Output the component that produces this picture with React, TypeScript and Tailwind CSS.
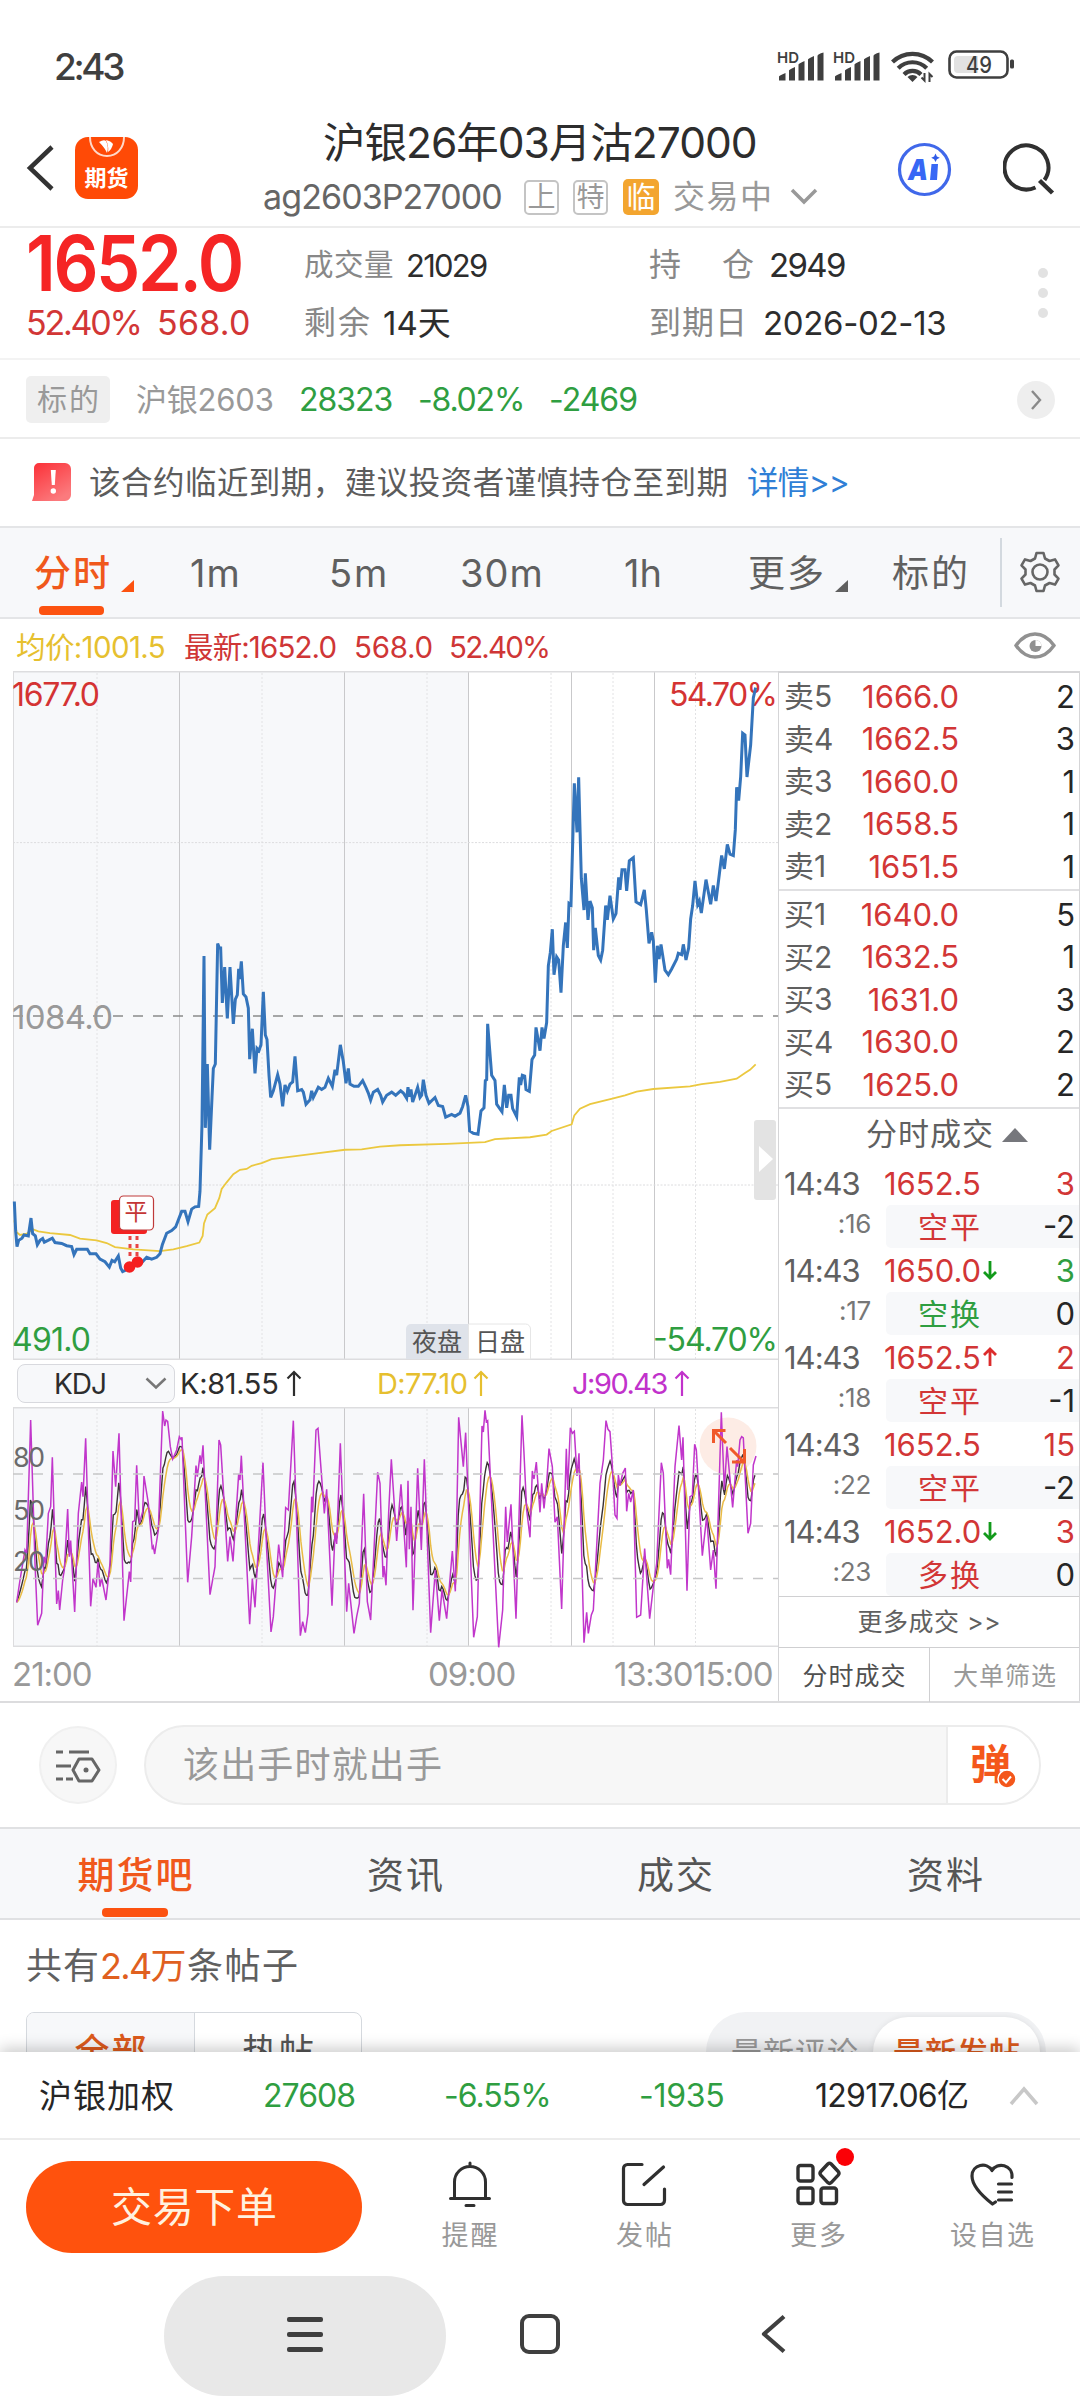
import { useLayoutEffect, useRef, useState } from "react";

/** Single-line label that spreads its glyphs over the width of its box. */
function T({ className = "", children }: { className?: string; children: string }) {
  const box = useRef<HTMLSpanElement>(null);
  const text = useRef<HTMLSpanElement>(null);
  const [spacing, setSpacing] = useState(0);
  useLayoutEffect(() => {
    if (!box.current || !text.current) return;
    const gaps = Math.max(1, Array.from(children).length - 1);
    setSpacing((box.current.offsetWidth - text.current.offsetWidth) / gaps);
  }, [children]);
  return (
    <span ref={box} className={"block shrink-0 whitespace-pre leading-none " + className}>
      <span ref={text} style={{ letterSpacing: spacing }}>{children}</span>
    </span>
  );
}

const SHIFT = 1140;
type P = [number, number];
const parse = (s: string, dx = 0): P[] =>
  s.trim().split(/\s+/).map((p) => {
    const [x, y] = p.split(",").map(Number);
    return [x + dx, y] as P;
  });
const toPath = (pts: P[]) => pts.map(([x, y], i) => `${i ? "L" : "M"}${x.toFixed(1)} ${y.toFixed(1)}`).join("");

const price = toPath([
  ...parse(`43,1213 47,1280 51,1314 56,1300 66,1295 72,1288 85,1290 93,1250 98,1285 106,1290 112,1310 120,1300 128,1296 133,1304 144,1300 157,1295 165,1305 185,1307 200,1312 215,1314 222,1332 230,1320 262,1320 270,1330 288,1330 300,1342 315,1348 328,1360 336,1345 344,1348 355,1335 362,1362 368,1370 380,1366 390,1360 410,1349 425,1350 440,1338 455,1342 470,1338 480,1330 487,1310 500,1284 515,1278 527,1270 545,1235 555,1235 564,1258 575,1230 585,1225 596,1224 600,1190 606,1040 612,663 616,1048 622,905 629,1097 636,980 640,915 646,905 653,635 658,645 662,645 667,768 674,688 682,803 690,688 700,815 706,760 712,750 716,692 719,715 724,675 730,748 738,755 745,780 749,894 757,826 765,926 771,870 777,875 783,862 790,743 796,840 801,850 807,930 812,980 820,965 833,929 840,950 848,1000 855,952 862,966 870,950 878,945 885,888 893,965 905,962 910,968 918,995 930,985 935,965 940,980 955,957 965,962 975,957 985,937 997,955 1005,918 1010,930 1021,862 1030,900 1038,948 1045,915 1050,950 1062,955 1075,955 1088,942 1098,958 1105,970 1112,986 1120,968 1133,962`),
  ...parse(`2,975 8,990 20,975 35,968 47,975 62,965 70,970 80,982 84,957 88,978 93,962 98,990 105,975 113,957 120,980 125,975 130,940 138,975 147,993 165,980 175,998 188,1000 197,1024 215,1018 225,1022 240,1015 248,1000 257,975 264,1000 269,1055 280,1060 294,1062 303,1010 312,1003 316,942 320,940 323,815 335,930 345,942 350,995 366,1012 373,952 380,1003 386,975 393,975 398,1005 410,1023 418,935 422,952 427,930 434,932 438,962 448,966 456,895 464,885 468,823 480,875 486,823 492,848 500,812 505,685 511,655 517,603 522,705 530,665 536,672 543,745 550,640 557,588 562,645 567,545 573,548 583,276 591,386 596,263 604,490 612,560 616,478 624,582 630,540 637,555 641,650 646,600 655,662 662,672 668,650 677,550 682,582 690,528 700,580 708,568 716,487 720,515 726,470 735,470 740,517 748,450 760,443 768,542 782,548 793,515 799,560 807,635 815,610 820,630 826,723 832,640 837,670 843,637 855,695 865,705 875,692 890,670 895,657 905,660 910,637 918,672 926,645 932,580 938,550 945,495 953,548 958,540 964,567 978,492 992,547 1000,505 1008,540 1018,480 1025,438 1033,468 1042,413 1050,435 1060,438 1066,380 1070,285 1076,315 1082,262 1088,164 1095,168 1101,262 1112,190 1120,85 1127,62`, SHIFT),
]);

const average = toPath([
  ...parse(`43,1255 50,1282 60,1288 80,1285 98,1275 115,1280 150,1284 210,1288 240,1296 290,1300 320,1306 345,1315 400,1320 480,1324 520,1320 560,1313 598,1305 608,1290 612,1262 622,1242 645,1228 658,1205 665,1185 680,1170 700,1152 720,1142 740,1140 755,1133 785,1127 815,1118 880,1112 950,1105 1035,1097 1085,1096 1140,1090`),
  ...parse(`60,1087 200,1084 315,1080 345,1073 450,1069 500,1063 515,1055 575,1040 583,1020 600,1005 630,995 700,982 735,975 770,967 820,961 930,955 965,950 1020,945 1070,938 1095,925 1110,918 1127,906`, SHIFT),
]);

const jPoints: P[] = [
  ...parse(`50,757 60,690 75,600 80,610 92,210 105,640 113,826 125,790 132,620 137,640 145,490 152,470 157,322 170,762 175,722 179,780 188,690 193,660 203,477 208,620 212,572 224,786 235,490 245,396 249,440 257,265 272,769 279,686 288,712 294,636 300,710 305,684 318,750 330,640 339,303 347,410 357,250 372,812 388,665 392,696 398,515 404,512 410,346 418,520 428,485 432,378 445,460 457,598 460,590 464,612 475,540 488,183 494,228 498,210 503,214 511,290 518,327 530,300 538,260 543,268 546,262 563,697 575,560 588,347 592,380 600,316 604,342 609,286 630,734 645,650 657,270 662,285 683,634 690,560 699,634 716,372 720,390 724,317 749,823 757,686 765,772 789,338 800,600 813,846 820,800 836,584 848,682 857,473 865,480 880,212 901,857 908,815 916,848 924,790 935,440 938,487 948,240 954,235 973,490 980,418 996,767 1005,548 1010,582 1021,280 1040,785 1046,700 1062,850 1070,800 1078,760 1091,431 1102,755 1112,810 1133,367`),
  ...parse(`0,400 9,682 12,648 18,706 26,487 34,328 50,573 63,403 79,652 84,392 88,598 93,470 99,781 113,355 124,600 133,328 152,848 166,660 178,812 186,720 200,806 217,603 226,724 236,202 250,350 257,248 281,862 292,800 306,228 310,246 315,181 319,215 323,212 356,892 368,780 377,470 382,576 393,463 408,806 426,196 432,310 440,480 450,562 457,363 462,387 469,336 480,487 485,400 492,475 500,400 507,296 517,350 525,517 532,500 545,777 559,296 563,420 571,233 577,250 583,244 591,378 597,310 612,878 620,787 625,850 634,795 640,780 660,400 670,330 678,212 684,238 690,245 696,330 705,495 711,505 715,375 720,407 728,370 736,354 740,484 746,430 752,456 760,420 770,802 782,795 794,596 809,806 820,710 830,640 844,338 850,370 862,655 866,628 872,674 885,350 897,227 905,330 909,262 921,722 930,440 937,436 944,283 949,300 967,617 980,500 992,660 1000,600 1008,716 1024,187 1033,420 1041,290 1058,472 1070,330 1073,350 1080,270 1085,260 1090,264 1104,550 1112,520 1120,345 1128,318`, SHIFT),
];

/** K and D follow from J: J = 3K - 2D and D is a 1/3 moving average of K. */
function deriveKD(j: P[], step: number) {
  const k: P[] = [];
  const d: P[] = [];
  let prev = j[0][1];
  let i = 0;
  for (let x = j[0][0]; x <= j[j.length - 1][0]; x += step) {
    while (i < j.length - 2 && j[i + 1][0] < x) i++;
    const [x0, y0] = j[i];
    const [x1, y1] = j[i + 1];
    const jy = y0 + ((y1 - y0) * (x - x0)) / (x1 - x0);
    prev = (6 * prev + jy) / 7;
    d.push([x, prev]);
    k.push([x, (jy + 2 * prev) / 3]);
  }
  return { k: toPath(k), d: toPath(d) };
}
const kd = deriveKD(jPoints, 4.14);
const jPath = toPath(jPoints);

const SOLID = [179.5, 344.5, 468.5, 571.5, 654.5];
const DOTTED = [97, 262, 427, 551, 613, 695.5];

function Grid({ h }: { h: number }) {
  return (
    <>
      <rect x="13" y="0" width="455.5" height={h} fill="#f7f8fa" />
      {DOTTED.map((x) => (
        <line key={x} x1={x} x2={x} y1="2" y2={h} stroke="#e2e2e4" strokeDasharray="2 2" />
      ))}
      {SOLID.map((x) => (
        <line key={x} x1={x} x2={x} y1="1" y2={h} stroke="#c9c9cb" strokeWidth="1" />
      ))}
      <line x1="13.5" x2="13.5" y1="0" y2={h} stroke="#dcdcde" />
      <line x1="13" x2="778" y1="0.75" y2="0.75" stroke="#dddddf" strokeWidth="1.5" />
      <line x1="13" x2="778" y1={h - 0.75} y2={h - 0.75} stroke="#dddddf" strokeWidth="1.5" />
    </>
  );
}

function ChartText({ x, w, cy, size, fill, children }: { x: number; w: number; cy: number; size: number; fill: string; children: string }) {
  return (
    <text x={x} y={cy + size * 0.3635} textLength={w} fontSize={size} fill={fill}>{children}</text>
  );
}

function PriceChart() {
  return (
    <svg width="778" height="689" viewBox="0 0 778 689" className="block">
      <Grid h={689} />
      {[171.6, 514].map((y) => (
        <line key={y} x1="13" x2="778" y1={y} y2={y} stroke="#dcdcde" strokeDasharray="2 1.5" />
      ))}
      <line x1="13" x2="778" y1="345" y2="345" stroke="#8b8b8b" strokeWidth="1.6" strokeDasharray="10 10" />
      <ChartText x={12} w={88} cy={23.500} size={32} fill="#d43333">1677.0</ChartText>
      <ChartText x={669} w={109} cy={23.500} size={32} fill="#d43333">54.70%</ChartText>
      <ChartText x={12} w={101} cy={346.500} size={33} fill="#999">1084.0</ChartText>
      <ChartText x={12} w={79} cy={668.500} size={32} fill="#2f9e41">491.0</ChartText>
      <ChartText x={653} w={125} cy={668.500} size={32} fill="#2f9e41">-54.70%</ChartText>
      <g transform="translate(0 -11) scale(0.33333 0.44643)" fill="none" strokeLinejoin="miter">
        <path d={average} stroke="#ebc83f" strokeWidth="1.8" vectorEffect="non-scaling-stroke" />
        <path d={price} stroke="#3474bb" strokeWidth="3" vectorEffect="non-scaling-stroke" />
      </g>
      <rect x="111" y="529" width="36" height="34" rx="3" fill="#f32222" />
      <path d="M130 565v24M137 565v20" stroke="#e84444" strokeWidth="3" strokeDasharray="4 4" />
      <circle cx="129.5" cy="596" r="5.8" fill="#f51f1f" />
      <circle cx="137.5" cy="591" r="5.8" fill="#f51f1f" />
      <rect x="119.5" y="525" width="34" height="34" rx="4" fill="#fff" stroke="#bf3a3a" strokeWidth="1.2" />
      <text x="136" y="549" textAnchor="middle" fontSize="23" fill="#c43636">平</text>
      <path d="M406 688v-30a5 5 0 0 1 5-5h57.500v35z" fill="#dfe3ea" />
      <path d="M468.500 653h57a5 5 0 0 1 5 5v30h-62z" fill="#fff" stroke="#e6e6e6" />
      <text x="437" y="680" textAnchor="middle" fontSize="25" fill="#555">夜盘</text>
      <text x="500" y="680" textAnchor="middle" fontSize="25" fill="#555">日盘</text>
      <rect x="754" y="449" width="22" height="80" rx="3" fill="#e3e3e3" />
      <path d="M759 475l14 13-14 13z" fill="#fff" />
    </svg>
  );
}

function KdjChart() {
  return (
    <svg width="778" height="240" viewBox="0 0 778 240" className="block overflow-visible">
      <Grid h={240} />
      <circle cx="728" cy="39" r="28.500" fill="#fdece5" />
      <g transform="translate(0 -57) scale(0.33333)" fill="none">
        <path d={kd.k} stroke="#3a3236" strokeWidth="1.4" vectorEffect="non-scaling-stroke" />
        <path d={kd.d} stroke="#e9bb45" strokeWidth="1.5" vectorEffect="non-scaling-stroke" />
        <path d={jPath} stroke="#c136cb" strokeWidth="1.5" vectorEffect="non-scaling-stroke" />
      </g>
      {[67, 119, 171.5].map((y) => (
        <line key={y} x1="13" x2="778" y1={y} y2={y} stroke="#c6c6c8" strokeWidth="1.3" strokeDasharray="10 10" />
      ))}
      <ChartText x={13} w={32} cy={50.500} size={27} fill="#6b6b6b">80</ChartText>
      <ChartText x={13} w={32} cy={103} size={27} fill="#6b6b6b">50</ChartText>
      <ChartText x={13} w={32} cy={154.500} size={27} fill="#6b6b6b">20</ChartText>
      <g stroke="#f0592b" strokeWidth="3" fill="none">
        <path d="M726 36l-12-12M713.500 36v-12.500h12M730 41l13 13M732 55h12.500v-13" />
      </g>
    </svg>
  );
}

function UpArrow() {
  return (
    <svg width="16" height="27" viewBox="0 0 16 27" fill="none" stroke="currentColor" strokeWidth="2.2">
      <path d="M8 26V2M1.500 8.500L8 2l6.500 6.500" />
    </svg>
  );
}

function SignalBars() {
  return (
    <span className="relative block h-[32px] w-[56px]">
      <T className="absolute left-0 top-0 w-[22px] text-[15px] font-semibold">HD</T>
      <svg className="absolute left-[2px] top-[2px]" width="46" height="29" viewBox="0 0 46 29" fill="#3f3f3f">
        <path d="M0 28.500v-4q0-1 6.500-3.500v7.500zM10 28.500v-10q0-1 6-3.500v13.500zM19.500 28.500v-16q0-1 6-3.500v19.500zM29 28.500v-21q0-1 6-3.500v24.500zM38.500 28.500V4q0-2 6-3.500v28z" />
      </svg>
    </span>
  );
}

function StatusBar() {
  return (
    <div className="flex h-[120px] items-start pt-[48px] text-[#3f3f3f]">
      <T className="ml-[54px] w-[72px] text-[37px] font-medium">2:43</T>
      <div className="ml-[651px] mt-[2px] flex">
        <SignalBars />
        <SignalBars />
      </div>
      <svg className="ml-[2px] mt-[1px]" width="44" height="34" viewBox="0 0 44 34" fill="none" stroke="#3f3f3f" strokeWidth="4.200">
        <path d="M1.500 13a28.500 28.500 0 0 1 40 0M7.200 19.200a20 20 0 0 1 28.500 0M13 25.500a12 12 0 0 1 17 0" />
        <path d="M16.500 28a7 7 0 0 1 10 0l-5 5z" fill="#3f3f3f" stroke="none" />
        <path d="M33.500 24v7.500l-3-3M38.500 33v-8l3 3" strokeWidth="2" />
      </svg>
      <svg className="ml-[13px] mt-[1px]" width="68" height="30" viewBox="0 0 68 30">
        <rect x="1.500" y="2.500" width="58" height="26" rx="7" fill="#fff" stroke="#3f3f3f" strokeWidth="2.600" />
        <path d="M6 11a4 4 0 0 1 4-4h20v17H10a4 4 0 0 1-4-4z" fill="#e2e2e2" />
        <rect x="62" y="10.500" width="4" height="9" rx="1.500" fill="#3f3f3f" />
        <text x="18" y="23.500" textLength="26" lengthAdjust="spacingAndGlyphs" fontSize="22.500" fontWeight="500" fill="#3f3f3f">49</text>
      </svg>
    </div>
  );
}

function Header() {
  return (
    <header className="flex h-[108px] border-b-2 border-[#ececec]">
      <svg className="ml-[26px] mt-[24px]" width="30" height="48" viewBox="0 0 30 48" fill="none" stroke="#333" strokeWidth="4.500">
        <path d="M26 3L4 24l22 21" />
      </svg>
      <div className="relative ml-[19px] mt-[17px] h-[62px] w-[63px] overflow-hidden rounded-[13px] bg-[#ff4a06]">
        <svg className="absolute left-0 top-0" width="63" height="24" viewBox="0 0 63 24" fill="none">
          <path d="M15 0c0 11 7 19 17 19s17-8 17-19" stroke="#ffd9c9" strokeWidth="2" />
          <path d="M24 5q5-3 7-1q3 6 1 12q-2-5-8-11zM31 3q5 1 7 4q-1 5-5 8q1-6-2-12z" fill="#fff" />
        </svg>
        <span className="absolute left-0 top-[30px] w-full text-center text-[22px] font-bold leading-none text-white">期货</span>
      </div>
      <div className="ml-[124px] w-[560px] shrink-0">
        <T className="ml-[61px] mt-[2px] w-[435px] text-[42.500px] text-[#2d2d2d]">沪银26年03月沽27000</T>
        <div className="mt-[15px] flex h-[35px] items-center">
          <T className="ml-[1px] w-[240px] text-[34px] text-[#666]">ag2603P27000</T>
          <span className="ml-[21px] flex size-[35px] items-center justify-center rounded-[5px] border-2 border-[#c4c4c4] text-[28px] leading-none text-[#999]">上</span>
          <span className="ml-[14px] flex size-[35px] items-center justify-center rounded-[5px] border-2 border-[#c4c4c4] text-[28px] leading-none text-[#999]">特</span>
          <span className="ml-[15px] flex size-[36px] items-center justify-center rounded-[5px] bg-[#f3a52f] text-[29px] leading-none text-white">临</span>
          <T className="ml-[14px] w-[99px] text-[32px] text-[#999]">交易中</T>
          <svg className="ml-[18px]" width="28" height="18" viewBox="0 0 28 18" fill="none" stroke="#999" strokeWidth="3.500">
            <path d="M2 2l12 12L26 2" />
          </svg>
        </div>
      </div>
      <svg className="ml-[75px] mt-[22px]" width="55" height="55" viewBox="0 0 55 55">
        <circle cx="27.500" cy="27.500" r="25" fill="#fff" stroke="#4068ea" strokeWidth="3.200" />
        <path d="M38.500 11.500l1.400 2.900 2.900 1.400-2.900 1.400-1.400 2.900-1.400-2.900-2.900-1.400 2.900-1.400z" fill="#2f5be8" />
        <text x="11" y="38" textLength="20" lengthAdjust="spacingAndGlyphs" fontSize="29" fontWeight="900" fontStyle="italic" fill="#3767f5">A</text>
        <path d="M34.500 22h6.500l-1 16h-7z" fill="#3767f5" />
      </svg>
      <svg className="ml-[51px] mt-[23px]" width="52" height="54" viewBox="0 0 52 54" fill="none" stroke="#303030" strokeWidth="4">
        <path d="M32.500 44.500a22 22 0 1 1 9-7.500" />
        <path d="M36.500 37.500l13 12.500" strokeWidth="4.500" />
      </svg>
    </header>
  );
}

function Quote() {
  return (
    <section className="flex h-[132px] border-b-2 border-[#f3f3f3]">
      <div className="ml-[26px] w-[278px] shrink-0">
        <T className="-mt-[3px] w-[238px] origin-left scale-x-[0.915] text-[77px] font-semibold text-[#f52525]">1652.0</T>
        <div className="mt-[4px] flex h-[34px]">
          <T className="w-[117px] text-[34px] text-[#d23636]">52.40%</T>
          <T className="ml-[14px] w-[93px] text-[34px] text-[#d23636]">568.0</T>
        </div>
      </div>
      <div className="w-[345px] shrink-0 text-[#2d2d2d]">
        <div className="mt-[19px] flex h-[36px] items-center">
          <T className="w-[90px] text-[29.500px] text-[#888]">成交量</T>
          <T className="ml-[12px] w-[82px] text-[31px]">21029</T>
        </div>
        <div className="mt-[22px] flex h-[36px] items-center">
          <T className="w-[66px] text-[32px] text-[#888]">剩余</T>
          <T className="ml-[13px] w-[68px] text-[33px]">14天</T>
        </div>
      </div>
      <div className="w-[389px] shrink-0 text-[#2d2d2d]">
        <div className="mt-[19px] flex h-[36px] items-center">
          <div className="flex w-[105px] justify-between text-[32px] leading-none text-[#888]"><span>持</span><span>仓</span></div>
          <T className="ml-[15px] w-[77px] text-[33px]">2949</T>
        </div>
        <div className="mt-[22px] flex h-[36px] items-center">
          <T className="w-[98px] text-[32px] text-[#888]">到期日</T>
          <T className="ml-[16px] w-[184px] text-[33px]">2026-02-13</T>
        </div>
      </div>
      <div className="mt-[40px] flex flex-col gap-[10px]">
        <span className="size-[10px] rounded-full bg-[#e2e2e2]" />
        <span className="size-[10px] rounded-full bg-[#e2e2e2]" />
        <span className="size-[10px] rounded-full bg-[#e2e2e2]" />
      </div>
    </section>
  );
}

function Underlying() {
  return (
    <section className="flex h-[79px] items-center border-b-2 border-[#ececec] pt-[2px] text-[32px] text-[#2f9e41]">
      <div className="ml-[26px] -mt-[1px] flex h-[47px] w-[84px] items-center justify-center rounded-[5px] bg-[#efefef]">
        <T className="w-[62px] text-[30px] text-[#999]">标的</T>
      </div>
      <T className="ml-[26px] w-[138px] text-[31px] text-[#999]">沪银2603</T>
      <T className="ml-[25px] w-[94px]">28323</T>
      <T className="ml-[25px] w-[107px]">-8.02%</T>
      <T className="ml-[24px] w-[89px]">-2469</T>
      <span className="ml-[379px] flex size-[38px] items-center justify-center rounded-full bg-[#eee]">
        <svg width="12" height="20" viewBox="0 0 12 20" fill="none" stroke="#8a8a8a" strokeWidth="2.400"><path d="M2 1l8 9-8 9" /></svg>
      </span>
    </section>
  );
}

function Warning() {
  return (
    <section className="flex h-[87px] items-center">
      <svg className="ml-[32px] -mt-[1px]" width="39" height="38" viewBox="0 0 39 38">
        <defs>
          <linearGradient id="warn" x1="0" y1="0" x2="0.600" y2="1">
            <stop offset="0" stopColor="#fb2f36" />
            <stop offset="1" stopColor="#fb7a7d" />
          </linearGradient>
        </defs>
        <path d="M7 0h26a6 6 0 0 1 6 6v26a6 6 0 0 1-6 6H0l2-6V5a5 5 0 0 1 5-5z" fill="url(#warn)" />
        <path d="M18.800 7h5l-1 15h-3z" fill="#fff" /><circle cx="21.300" cy="28" r="2.700" fill="#fff" />
      </svg>
      <T className="ml-[18px] w-[639px] text-[31.500px] text-[#5c5c5c]">该合约临近到期，建议投资者谨慎持仓至到期</T>
      <T className="ml-[19px] w-[103px] text-[31.500px] text-[#2f7fd6]">详情&gt;&gt;</T>
    </section>
  );
}

function Corner() {
  return <svg className="mt-[26px]" width="13" height="12" viewBox="0 0 13 12" fill="currentColor"><path d="M13 0v12H0z" /></svg>;
}

function Periods() {
  return (
    <nav className="flex h-[93px] items-center border-y-2 border-[#e4e5e7] bg-[#f7f8fa] text-[38px] text-[#606060]">
      <div className="relative ml-[34px] flex h-full w-[77px] items-center pt-[1px] text-[#f0581c]">
        <T className="w-[76px] text-[37px] font-medium">分时</T>
        <span className="absolute bottom-[2px] left-[5px] h-[9px] w-[65px] rounded-[4px] bg-[#fc5210]" />
      </div>
      <span className="ml-[10px] text-[#fc5210]"><Corner /></span>
      <T className="ml-[56px] mt-[1px] w-[50px]">1m</T>
      <T className="ml-[89px] mt-[1px] w-[58px]">5m</T>
      <T className="ml-[73px] mt-[1px] w-[83px]">30m</T>
      <T className="ml-[81px] mt-[1px] w-[38px]">1h</T>
      <T className="ml-[86px] mt-[1px] w-[76px] text-[37px]">更多</T>
      <span className="ml-[11px]"><Corner /></span>
      <T className="ml-[44px] mt-[1px] w-[76px] text-[37px]">标的</T>
      <span className="ml-[32px] h-[69px] w-[2px] bg-[#d3d9df]" />
      <svg className="ml-[17px] mt-[1px]" width="42" height="44" viewBox="0 0 42 44" fill="none" stroke="#666" strokeWidth="2.600" strokeLinejoin="round">
        <path d="M17.500 2h7l1.500 5.500 4.500 2.500 5.500-1.600 3.500 6-4 4.100v5l4 4.100-3.500 6-5.500-1.600-4.500 2.500-1.500 5.500h-7L16 34.500 11.500 32 6 33.600l-3.500-6 4-4.100v-5l-4-4.100 3.500-6L11.500 10 16 7.500z" />
        <circle cx="21" cy="21" r="7.500" />
      </svg>
    </nav>
  );
}

function Legend() {
  return (
    <div className="flex h-[52px] items-center pt-[5px] text-[29.500px] text-[#cf3636]">
      <T className="ml-[16px] w-[150px] text-[#e6c02f]">均价:1001.5</T>
      <T className="ml-[18px] w-[153px]">最新:1652.0</T>
      <T className="ml-[17px] w-[79px]">568.0</T>
      <T className="ml-[16px] w-[102px]">52.40%</T>
      <svg className="ml-[463px] -mt-[4px]" width="42" height="27" viewBox="0 0 42 27" fill="none" stroke="#919191" strokeWidth="3.400">
        <path d="M2 13.500Q10 2 21 2t19 11.500Q32 25 21 25T2 13.500z" />
        <circle cx="21.500" cy="14" r="6" fill="#919191" stroke="none" />
        <path d="M21.500 14V8a6 6 0 0 1 6 6z" fill="#fff" stroke="none" />
      </svg>
    </div>
  );
}

function KdjHeader() {
  return (
    <div className="flex h-[47px] items-center text-[29px] text-[#2d2d2d]">
      <div className="ml-[17px] flex h-[39px] w-[158px] items-center rounded-[8px] border border-[#d8d9de] bg-[#f7f8fa]">
        <T className="ml-[36px] w-[53px] text-[28px]">KDJ</T>
        <svg className="ml-[38px]" width="22" height="13" viewBox="0 0 22 13" fill="none" stroke="#777" strokeWidth="2.500"><path d="M1.500 1.500l9.500 9 9.500-9" /></svg>
      </div>
      <T className="ml-[5px] w-[99px]">K:81.55</T>
      <span className="ml-[7px]"><UpArrow /></span>
      <div className="ml-[75px] flex items-center text-[#e6bf2f]">
        <T className="w-[91px]">D:77.10</T>
        <span className="ml-[5px]"><UpArrow /></span>
      </div>
      <div className="ml-[83px] flex items-center text-[#c132cb]">
        <T className="w-[96px]">J:90.43</T>
        <span className="ml-[6px]"><UpArrow /></span>
      </div>
    </div>
  );
}

const asks = [["卖5", "1666.0", "2"], ["卖4", "1662.5", "3"], ["卖3", "1660.0", "1"], ["卖2", "1658.5", "1"], ["卖1", "1651.5", "1"]];
const bids = [["买1", "1640.0", "5"], ["买2", "1632.5", "1"], ["买3", "1631.0", "3"], ["买4", "1630.0", "2"], ["买5", "1625.0", "2"]];

function Level({ row }: { row: string[] }) {
  return (
    <div className="flex h-[42.500px] items-center pl-[5px] pr-[4px] text-[31px] leading-none">
      <span className="w-[62px] text-[30px] text-[#606060]">{row[0]}</span>
      <span className="w-[113px] text-right text-[#d23636]">{row[1]}</span>
      <span className="flex-1 text-right text-[#262626]">{row[2]}</span>
    </div>
  );
}

type Tick = { price: string; dir?: "up" | "down"; qty: string; green?: boolean; sec: string; kind: string; delta: string };
const ticks: Tick[] = [
  { price: "1652.5", qty: "3", sec: ":16", kind: "空平", delta: "-2" },
  { price: "1650.0", dir: "down", qty: "3", green: true, sec: ":17", kind: "空换", delta: "0" },
  { price: "1652.5", dir: "up", qty: "2", sec: ":18", kind: "空平", delta: "-1" },
  { price: "1652.5", qty: "15", sec: ":22", kind: "空平", delta: "-2" },
  { price: "1652.0", dir: "down", qty: "3", sec: ":23", kind: "多换", delta: "0" },
];

function TickRow({ t }: { t: Tick }) {
  const tone = t.green ? "text-[#2f9e41]" : "text-[#d23636]";
  return (
    <div className="h-[87px]">
      <div className="flex h-[44px] items-center pl-[5px] pr-[4px] text-[31px] leading-none">
        <T className="w-[77px] text-[#606060]">14:43</T>
        <T className="ml-[23px] w-[97px] text-[#d23636]">{t.price}</T>
        <span className="ml-[1px] w-[16px]">
          {t.dir && (
            <svg width="16" height="20" viewBox="0 0 16 20" fill="none" stroke={t.dir === "up" ? "#dc2c2c" : "#129a1b"} strokeWidth="2.800">
              <path d={t.dir === "up" ? "M8 19V2M2 8l6-6 6 6" : "M8 1v17M2 12l6 6 6-6"} />
            </svg>
          )}
        </span>
        <span className={"flex-1 text-right " + tone}>{t.qty}</span>
      </div>
      <div className="flex h-[43px] items-center leading-none">
        <span className="-mt-[6px] w-[92px] text-right text-[26px] tracking-[-0.300px] text-[#777]">{t.sec}</span>
        <div className="ml-[15px] flex h-full flex-1 items-center rounded-l-[5px] bg-[#f7f8fa] pr-[4px]">
          <T className={"ml-[32px] w-[62px] text-[30px] " + tone}>{t.kind}</T>
          <span className="flex-1 text-right text-[31px] text-[#262626]">{t.delta}</span>
        </div>
      </div>
    </div>
  );
}

function Depth() {
  return (
    <aside className="h-[1030px] w-[302px] border-x-[1.500px] border-t-2 border-[#d5d5d7]">
      <div className="h-[216px] pt-[2px]">{asks.map((r) => <Level key={r[0]} row={r} />)}</div>
      <div className="h-[218px] border-t-2 border-[#e0e0e2] pt-[2px]">{bids.map((r) => <Level key={r[0]} row={r} />)}</div>
      <div className="flex h-[54px] items-center border-t-2 border-[#e0e0e2] pb-[4px]">
        <T className="ml-[87px] w-[127px] text-[31px] text-[#606060]">分时成交</T>
        <svg className="ml-[9px] mt-[3px]" width="26" height="14" viewBox="0 0 26 14" fill="#76777c"><path d="M13 0l13 14H0z" /></svg>
      </div>
      <div className="h-[435px]">{ticks.map((t) => <TickRow key={t.sec} t={t} />)}</div>
      <div className="flex h-[51px] items-center justify-center border-t-[1.500px] border-[#d0d0d2]">
        <T className="w-[143px] text-[25px] text-[#606060]">更多成交 &gt;&gt;</T>
      </div>
      <div className="flex h-[55px] border-t-[1.500px] border-[#cfcfd1] pt-[0px] text-[25px]">
        <div className="flex w-[151px] items-center justify-center border-r-[1.500px] border-[#cfcfd1] pt-[2px] text-[#505050]"><T className="w-[103px]">分时成交</T></div>
        <div className="flex flex-1 items-center justify-center pt-[2px] text-[#999]"><T className="w-[103px]">大单筛选</T></div>
      </div>
    </aside>
  );
}

function Market() {
  return (
    <section className="flex h-[1032px] border-b-2 border-[#dcdcde]">
      <div className="w-[778px] shrink-0">
        <PriceChart />
        <KdjHeader />
        <KdjChart />
        <div className="flex pt-[11px] text-[33px] text-[#999]">
          <T className="ml-[12px] w-[81px]">21:00</T>
          <T className="ml-[335px] w-[88px]">09:00</T>
          <T className="ml-[98px] w-[80px]">13:30</T>
          <T className="ml-[-1px] w-[81px]">15:00</T>
        </div>
      </div>
      <Depth />
    </section>
  );
}

function CommentBar() {
  return (
    <section className="flex h-[124px] items-center">
      <span className="ml-[39px] flex size-[78px] items-center justify-center rounded-full border-2 border-[#f0f0f0] bg-[#f7f7f7]">
        <svg className="mt-[2px]" width="46" height="34" viewBox="0 0 46 34" fill="none" stroke="#666" strokeWidth="3">
          <path d="M1 3h7M14 3h20M1 17h15M1 30h7M11 30h7" />
          <path d="M24 10h13l7 11-7 11H24l-6-11z" strokeLinejoin="round" />
          <circle cx="31" cy="21" r="2.500" fill="#666" stroke="none" />
        </svg>
      </span>
      <div className="ml-[27px] flex h-[80px] w-[897px] items-center overflow-hidden rounded-full border-2 border-[#ececec] bg-[#f7f7f7]">
        <T className="ml-[37px] w-[259px] text-[36px] text-[#999]">该出手时就出手</T>
        <div className="relative ml-auto h-full w-[93px] border-l-2 border-[#ececec] bg-white">
          <span className="absolute left-[22px] top-[17px] text-[41px] font-bold leading-none text-[#f4571b]">弹</span>
          <svg className="absolute left-[49px] top-[42px]" width="20" height="20" viewBox="0 0 20 20">
            <circle cx="10" cy="10" r="9" fill="#f4571b" stroke="#fff" strokeWidth="1.500" />
            <path d="M5.500 10l3.500 3.500 5-6" fill="none" stroke="#fff" strokeWidth="2" />
          </svg>
        </div>
      </div>
    </section>
  );
}

function Forum() {
  return (
    <>
      <nav className="grid h-[93px] grid-cols-4 border-y-2 border-[#e0e1e3] bg-[#f7f8fa] text-[37px] text-[#555]">
        <div className="relative flex items-center justify-center pt-[3px] text-[#f0581c]">
          <T className="w-[115px] font-medium">期货吧</T>
          <span className="absolute bottom-[1px] left-[102px] h-[9px] w-[66px] rounded-[4px] bg-[#fc5210]" />
        </div>
        <div className="flex items-center justify-center pt-[3px]"><T className="w-[76px]">资讯</T></div>
        <div className="flex items-center justify-center pt-[3px]"><T className="w-[76px]">成交</T></div>
        <div className="flex items-center justify-center pt-[3px]"><T className="w-[76px]">资料</T></div>
      </nav>
      <section className="h-[132px] overflow-hidden">
        <div className="mt-[28px] flex pl-[26px] text-[36px] text-[#606060]">
          <T className="w-[73px]">共有</T>
          <T className="ml-[1px] w-[87px] text-[#e0601f]">2.4万</T>
          <T className="w-[111px]">条帖子</T>
        </div>
        <div className="mt-[28px] flex items-start pl-[26px]">
          <div className="flex h-[78px] w-[336px] overflow-hidden rounded-[8px] border-[1.500px] border-[#d5d9de] text-[35px]">
            <div className="flex w-[168px] items-center justify-center border-r-[1.500px] border-[#d5d9de] bg-[#f7f8fa] text-[#dc5a1c]"><T className="w-[72px] font-medium">全部</T></div>
            <div className="flex flex-1 items-center justify-center text-[#555]"><T className="w-[72px]">热帖</T></div>
          </div>
          <div className="ml-[344px] flex h-[80px] w-[340px] items-center rounded-full bg-[#f1f2f4] text-[31px]">
            <T className="ml-[25px] w-[127px] text-[#999]">最新评论</T>
            <div className="ml-[15px] flex h-[70px] w-[167px] items-center justify-center rounded-full bg-white text-[#dc5a1c] shadow-[0_0_6px_rgba(0,0,0,0.08)]"><T className="w-[127px] font-medium">最新发帖</T></div>
          </div>
        </div>
      </section>
    </>
  );
}

function IndexBar() {
  return (
    <section className="relative flex h-[88px] items-center border-b-2 border-[#ececec] bg-white pt-[2px] text-[32px] text-[#2f9e41] shadow-[0_-4px_14px_rgba(0,0,0,0.2)]">
      <T className="ml-[39px] w-[135px] text-[33px] text-[#262626]">沪银加权</T>
      <T className="ml-[89px] w-[93px]">27608</T>
      <T className="ml-[88px] w-[108px]">-6.55%</T>
      <T className="ml-[87px] w-[86px]">-1935</T>
      <T className="ml-[90px] w-[154px] text-[#262626]">12917.06亿</T>
      <svg className="ml-[40px]" width="30" height="20" viewBox="0 0 30 20" fill="none" stroke="#c8c8c8" strokeWidth="3.500"><path d="M2 18L15 3l13 15" /></svg>
    </section>
  );
}

function Actions() {
  return (
    <section className="relative flex h-[136px] bg-white">
      <div className="ml-[26px] mt-[21px] flex h-[92px] w-[336px] items-center justify-center rounded-full bg-[#ff520d] text-[41px] text-[#fff1df]">
        <T className="w-[166px]">交易下单</T>
      </div>
      <div className="ml-[20px] flex">
        <div className="flex w-[175px] flex-col items-center pt-[21px]">
          <svg width="44" height="48" viewBox="0 0 44 48" fill="none" stroke="#303030" strokeWidth="3" strokeLinecap="round">
            <path d="M2.500 37.500h39M6.500 37V21a15.500 15.500 0 0 1 31 0v16M22 5V2M18 44.500h8" />
          </svg>
          <T className="mt-[13px] w-[56px] text-[27px] text-[#999]">提醒</T>
        </div>
        <div className="flex w-[174px] flex-col items-center pt-[21px]">
          <svg width="46" height="48" viewBox="0 0 46 48" fill="none" stroke="#303030" strokeWidth="3.200" strokeLinecap="round">
            <path d="M21 3.500H6.500A4 4 0 0 0 2.500 7.500v32a4 4 0 0 0 4 4h33a4 4 0 0 0 4-4V28M42.500 6L23 23.500" />
          </svg>
          <T className="mt-[13px] w-[56px] text-[27px] text-[#999]">发帖</T>
        </div>
        <div className="relative flex w-[174px] flex-col items-center pt-[21px]">
          <svg width="46" height="48" viewBox="0 0 46 48" fill="none" stroke="#303030" strokeWidth="3.400" strokeLinejoin="round">
            <rect x="3" y="4.500" width="15" height="15.500" rx="2.500" />
            <rect x="3" y="27" width="15" height="15.500" rx="2.500" />
            <rect x="26" y="27" width="15.500" height="15.500" rx="2.500" />
            <path d="M32.800 3q1.700-1.600 3.400 0l7 7.500q1.600 1.800 0 3.600l-7 7.500q-1.700 1.600-3.400 0l-7-7.500q-1.600-1.800 0-3.600z" />
          </svg>
          <span className="absolute left-[105px] top-[8px] size-[18px] rounded-full bg-[#fb0006]" />
          <T className="mt-[13px] w-[56px] text-[27px] text-[#999]">更多</T>
        </div>
        <div className="flex w-[174px] flex-col items-center pt-[21px]">
          <svg width="46" height="48" viewBox="0 0 46 48" fill="none" stroke="#303030" strokeWidth="3.200" strokeLinecap="round" strokeLinejoin="round">
            <path d="M26.500 41l-3 2Q3 27 3 15C3 3.500 18 .5 23 9.500c5-9 21-6 20 7M29.500 23h13M29.500 31h13M29.500 39h13" />
          </svg>
          <T className="mt-[13px] w-[84px] text-[27px] text-[#999]">设自选</T>
        </div>
      </div>
    </section>
  );
}

function SystemNav() {
  return (
    <div className="flex h-[124px] items-start bg-white">
      <div className="ml-[164px] flex h-[120px] w-[282px] flex-col items-center justify-center gap-[10px] rounded-[60px] bg-[#e8e8e8] pb-[3px]">
        <span className="h-[5px] w-[36px] rounded-[2px] bg-[#3f3f3f]" />
        <span className="h-[5px] w-[36px] rounded-[2px] bg-[#3f3f3f]" />
        <span className="h-[5px] w-[36px] rounded-[2px] bg-[#3f3f3f]" />
      </div>
      <span className="ml-[74px] mt-[38px] size-[40px] rounded-[9px] border-4 border-[#3f3f3f]" />
      <svg className="ml-[200px] mt-[38px]" width="26" height="40" viewBox="0 0 26 40" fill="none" stroke="#3f3f3f" strokeWidth="4.200" strokeLinejoin="round">
        <path d="M24 2.500L4 20l20 17.500" />
      </svg>
    </div>
  );
}

export default function App() {
  return (
    <main className="h-[2400px] w-[1080px] overflow-hidden bg-white font-['Inter','Noto_Sans_CJK_SC',sans-serif]">
      <StatusBar />
      <Header />
      <Quote />
      <Underlying />
      <Warning />
      <Periods />
      <Legend />
      <Market />
      <CommentBar />
      <Forum />
      <IndexBar />
      <Actions />
      <SystemNav />
    </main>
  );
}
